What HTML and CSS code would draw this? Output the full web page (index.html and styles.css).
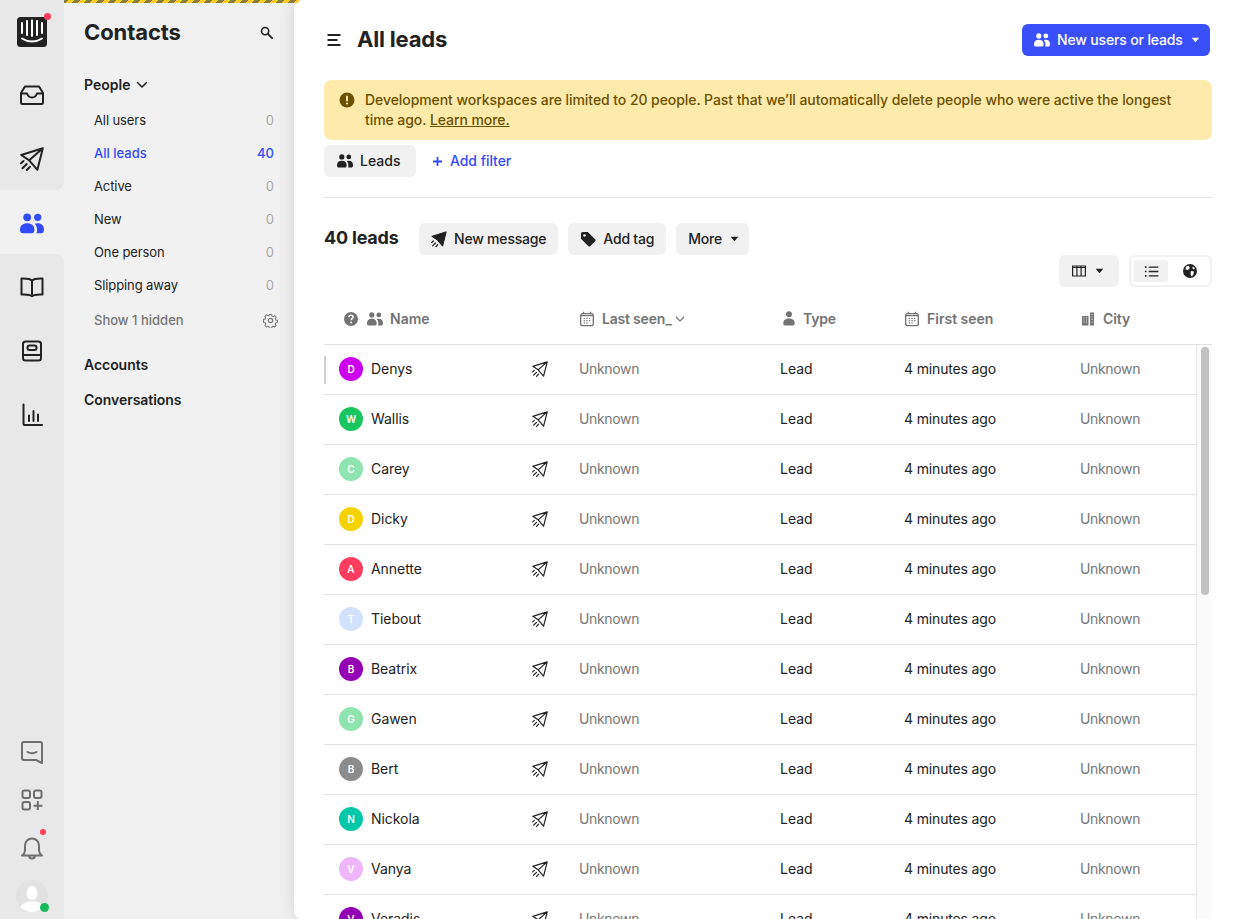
FILE: index.html
```html
<!DOCTYPE html>
<html lang="en">
<head>
<meta charset="utf-8">
<title>All leads</title>
<link rel="stylesheet" href="styles.css">
</head>
<body>
<svg class="defs" aria-hidden="true">
  <symbol id="plane" viewBox="0 0 24 24"><path d="M22.800 1.300 1.200 8l8 5.300 8.200 9.500L22.800 1.300ZM22.800 1.300 9.200 13.300" fill="none" stroke="currentColor" stroke-linejoin="round" stroke-linecap="round"/><path d="M3.500 14 1 16.300M6.700 17 2.500 21.300M10 19.700 6.800 23" fill="none" stroke="currentColor" stroke-linecap="round"/></symbol>
  <symbol id="plane-solid" viewBox="0 0 24 24"><path d="M22.800 1.300 1.200 8l8 5.300 8.200 9.500Z" fill="currentColor" stroke="currentColor" stroke-width="1.500" stroke-linejoin="round"/><path d="M3.500 15 1 17.300M6.700 18 2.500 22.300M10 20.700 7.500 23.500" fill="none" stroke="currentColor" stroke-width="2" stroke-linecap="round"/></symbol>
  <symbol id="people" viewBox="0 0 16 14"><circle cx="4.800" cy="2.900" r="2.600" fill="currentColor"/><circle cx="11.800" cy="2.900" r="2.400" fill="currentColor"/><path d="M0 11.200C0 8.300 2 6.800 4.800 6.800s4.800 1.500 4.800 4.400c0 1.500-.6 2.300-1.600 2.300H1.800C.6 13.500 0 12.700 0 11.200Z" fill="currentColor"/><path d="M11 13.500h3.300c1 0 1.700-.8 1.700-2.300 0-2.900-1.700-4.400-4.200-4.400-.8 0-1.400.1-2 .4 1 1 1.600 2.400 1.600 4 0 .9-.1 1.700-.4 2.300Z" fill="currentColor"/></symbol>
  <symbol id="calendar" viewBox="0 0 16 16"><rect x="1.700" y="2.700" width="12.600" height="12" rx="2" fill="none" stroke="currentColor" stroke-width="1.300"/><path d="M4.500 .8v2.400M11.500 .8v2.400M2 4.600h12" stroke="currentColor" stroke-width="1.300" fill="none"/><path d="M4.700 7.500h1.200M7.400 7.500h1.200M10.100 7.500h1.200M4.700 9.700h1.200M7.400 9.700h1.200M10.100 9.700h1.200M4.700 11.900h1.200M7.400 11.900h1.200" stroke="currentColor" stroke-width="1.200" fill="none"/></symbol>
  <symbol id="caret" viewBox="0 0 10 6"><path d="M.8.500h8.400L5 5.500Z" fill="currentColor"/></symbol>
</svg>

<div class="hazard"></div>

<nav class="rail">
  <div class="rail-seg rail-top">
    <div class="rail-item rail-logo">
      <svg class="logo" viewBox="0 0 30 30"><rect width="30" height="30" rx="3.500" fill="#222"/><path d="M5 6v10M10 4v14M15 3.500v15.500M20 4v14M25 6v10" stroke="#fff" stroke-width="2" stroke-linecap="round" fill="none"/><path d="M5 21.500c6 4 14 4 20 0" stroke="#fff" stroke-width="2" stroke-linecap="round" fill="none"/></svg>
      <span class="dot dot-logo"></span>
    </div>
    <div class="rail-item">
      <svg class="ico24" viewBox="0 0 24 24"><path d="M5 3.500h14l4 6.500v9.500a1.500 1.500 0 0 1-1.500 1.500h-19A1.500 1.500 0 0 1 1 19.500V10z" fill="none" stroke="currentColor" stroke-width="2" stroke-linejoin="round"/><path d="M1.500 10.500H7c1 2.700 2.800 4 5 4s4-1.300 5-4h5.500" fill="none" stroke="currentColor" stroke-width="2" stroke-linejoin="round"/></svg>
    </div>
    <div class="rail-item"><svg class="ico24 ico-plane-lg"><use href="#plane"/></svg></div>
  </div>
  <div class="rail-item rail-active"><svg class="ico-people"><use href="#people"/></svg></div>
  <div class="rail-seg rail-rest">
    <div class="rail-item">
      <svg class="ico24" viewBox="0 0 24 24"><path d="M12 5.500C10 3.800 7 3.200 1.500 3.500v16C7 19.200 10 19.500 12 21.200c2-1.700 5-2 10.500-1.700v-16C17 3.200 14 3.800 12 5.500ZM12 5.500v15.500" fill="none" stroke="currentColor" stroke-width="2" stroke-linejoin="round"/></svg>
    </div>
    <div class="rail-item">
      <svg class="ico24" viewBox="0 0 24 24"><rect x="3" y="2.500" width="18" height="19" rx="2.500" fill="none" stroke="currentColor" stroke-width="2"/><rect x="7.500" y="6.500" width="9" height="4.500" rx="2" fill="none" stroke="currentColor" stroke-width="2"/><path d="M3 16h18" stroke="currentColor" stroke-width="2"/></svg>
    </div>
    <div class="rail-item">
      <svg class="ico24" viewBox="0 0 24 24"><path d="M3.500 1.500V21a1 1 0 0 0 1 1h17.500M9 12.500v5.500M13.500 8v10M18 11.500v6.500" fill="none" stroke="currentColor" stroke-width="2" stroke-linecap="round"/></svg>
    </div>
    <div class="rail-spacer"></div>
    <div class="rail-item rail-small">
      <svg class="ico24" viewBox="0 0 24 24"><path d="M4 2h16a2 2 0 0 1 2 2v19l-6-3H4a2 2 0 0 1-2-2V4a2 2 0 0 1 2-2Z" fill="none" stroke="currentColor" stroke-width="2" stroke-linejoin="round"/><path d="M7.500 12c3 1.700 6 1.700 9 0" fill="none" stroke="currentColor" stroke-width="2" stroke-linecap="round"/></svg>
    </div>
    <div class="rail-item rail-small">
      <svg class="ico24" viewBox="0 0 24 24"><rect x="2.500" y="2.500" width="7.500" height="7.500" rx="2" fill="none" stroke="currentColor" stroke-width="2"/><rect x="14" y="2.500" width="7.500" height="7.500" rx="2" fill="none" stroke="currentColor" stroke-width="2"/><rect x="2.500" y="14" width="7.500" height="7.500" rx="2" fill="none" stroke="currentColor" stroke-width="2"/><path d="M17.800 13v9M13.500 17.800h9" stroke="currentColor" stroke-width="2" fill="none"/></svg>
    </div>
    <div class="rail-item rail-small">
      <svg class="ico24" viewBox="0 0 24 24"><path d="M2 19.500c1.500-1 2.800-2.500 3-5V9.500a7 7 0 0 1 14 0v5c.2 2.500 1.500 4 3 5ZM9 19.500c0 4 6 4 6 0" fill="none" stroke="currentColor" stroke-width="2" stroke-linejoin="round"/></svg>
      <span class="dot dot-bell"></span>
    </div>
    <div class="rail-item rail-small rail-me">
      <svg class="me" viewBox="0 0 32 32"><defs><clipPath id="mec"><circle cx="16" cy="16" r="16"/></clipPath></defs><circle cx="16" cy="16" r="16" fill="#e2e2e2"/><g clip-path="url(#mec)"><ellipse cx="16" cy="13" rx="5.500" ry="7" fill="#fff"/><path d="M3 32c0-7 5-9 9-10.500h8C24 23 29 25 29 32Z" fill="#fff"/></g></svg>
      <span class="dot dot-me"></span>
    </div>
  </div>
</nav>

<aside class="side">
  <div class="side-head">
    <h1 class="side-title">Contacts</h1>
    <svg class="side-search" viewBox="0 0 14 14"><circle cx="5.500" cy="5.500" r="3.900" fill="none" stroke="currentColor" stroke-width="1.700"/><path d="M8.500 8.500 13 13" stroke="currentColor" stroke-width="2" stroke-linecap="round"/></svg>
  </div>
  <div class="side-group">People <svg class="chev" viewBox="0 0 12 8"><path d="M1.500 1.500 6 6l4.500-4.500" fill="none" stroke="currentColor" stroke-width="1.500" stroke-linecap="round" stroke-linejoin="round"/></svg></div>
  <ul class="side-list">
    <li class="side-row"><span>All users</span><span class="count">0</span></li>
    <li class="side-row is-current"><span>All leads</span><span class="count">40</span></li>
    <li class="side-row"><span>Active</span><span class="count">0</span></li>
    <li class="side-row"><span>New</span><span class="count">0</span></li>
    <li class="side-row"><span>One person</span><span class="count">0</span></li>
    <li class="side-row"><span>Slipping away</span><span class="count">0</span></li>
  </ul>
  <div class="side-hidden"><span>Show 1 hidden</span>
    <svg class="gear" viewBox="0 0 16 16"><path d="M6.700 1h2.600l.4 1.900 1.300.6 1.700-1 1.800 1.800-1 1.700.6 1.300 1.900.4v2.600l-1.900.4-.6 1.300 1 1.700-1.800 1.800-1.700-1-1.300.6-.4 1.900H6.700l-.4-1.900-1.300-.6-1.700 1-1.800-1.800 1-1.700-.6-1.300-1.900-.4V6.700l1.900-.4.600-1.300-1-1.700 1.800-1.800 1.700 1 1.300-.6Z" transform="translate(.6 .6) scale(.925)" fill="none" stroke="currentColor" stroke-width="1.200" stroke-linejoin="round"/><circle cx="8" cy="8" r="2.300" fill="none" stroke="currentColor" stroke-width="1.200"/></svg>
  </div>
  <div class="side-link side-link-first">Accounts</div>
  <div class="side-link">Conversations</div>
</aside>

<main class="main">
  <header class="top">
    <div class="top-left">
      <svg class="menu" viewBox="0 0 14 12"><path d="M.5 1h13M.5 6h10M.5 11h13" stroke="currentColor" stroke-width="2" fill="none"/></svg>
      <h2 class="page-title">All leads</h2>
    </div>
    <button class="btn-primary"><svg class="ico-p"><use href="#people"/></svg><span>New users or leads</span><svg class="caret"><use href="#caret"/></svg></button>
  </header>

  <div class="banner">
    <svg class="banner-ico" viewBox="0 0 16 16"><circle cx="8" cy="8" r="7.500" fill="currentColor"/><rect x="7" y="3.500" width="2" height="6" rx="1" fill="#feebab"/><circle cx="8" cy="11.500" r="1.100" fill="#feebab"/></svg>
    <p class="banner-text">Development workspaces are limited to 20 people. Past that we’ll automatically delete people who were active the longest time ago. <a class="banner-link">Learn more.</a></p>
  </div>

  <div class="filters">
    <div class="chip"><svg class="ico-p"><use href="#people"/></svg>Leads</div>
    <div class="add-filter"><svg class="plus" viewBox="0 0 9 9"><path d="M4.500 0v9M0 4.500h9" stroke="currentColor" stroke-width="1.800" fill="none"/></svg>Add filter</div>
  </div>
  <hr class="rule">

  <div class="bulk">
    <div class="bulk-count">40 leads</div>
    <button class="btn"><svg class="ico-16"><use href="#plane-solid"/></svg>New message</button>
    <button class="btn"><svg class="ico-16" viewBox="0 0 16 16"><path d="M1 2.500A1.500 1.500 0 0 1 2.500 1h4.700c.4 0 .8.200 1.100.4l6.800 6.800a1.500 1.500 0 0 1 0 2.100l-4.700 4.700a1.500 1.500 0 0 1-2.100 0L1.400 8.300A1.500 1.500 0 0 1 1 7.200Z" fill="currentColor"/><circle cx="4.500" cy="4.500" r="1.300" fill="#f1f1f1"/></svg>Add tag</button>
    <button class="btn btn-more">More<svg class="caret"><use href="#caret"/></svg></button>
  </div>

  <div class="views">
    <button class="btn btn-cols">
      <svg class="ico-cols" viewBox="0 0 14 12"><path d="M.6 1h12.800v10H.6ZM.6 2.500h12.800M4.900 1v10M9.100 1v10" fill="none" stroke="currentColor" stroke-width="1.200"/></svg>
      <svg class="caret"><use href="#caret"/></svg>
    </button>
    <div class="switch">
      <span class="switch-item is-on"><svg class="ico-list" viewBox="0 0 16 12"><path d="M5 1.200h10.500M5 6h10.500M5 10.800h10.500" stroke="currentColor" stroke-width="1.400" fill="none"/><path d="M.8 1.200h1.800M.8 6h1.800M.8 10.800h1.800" stroke="currentColor" stroke-width="1.800" fill="none"/></svg></span>
      <span class="switch-item switch-globe"><svg class="ico-globe" viewBox="0 0 14 14"><circle cx="7" cy="7" r="7" fill="currentColor"/><path d="M3 2.500 6 1.800 6.800 4 5 6 2.500 5.500ZM8 7l3 .5-.8 3.500-1.700 1.500L7.500 10ZM10 2.500l2 2-1.500 1-1.300-1.500Z" fill="#fff"/></svg></span>
    </div>
  </div>

  <div class="thead">
    <div class="th th-name">
      <svg class="ico-help" viewBox="0 0 14 14"><circle cx="7" cy="7" r="7" fill="currentColor"/><path d="M4.900 5.200C5 4 5.900 3.300 7 3.300c1.200 0 2.100.8 2.100 1.900 0 1.500-2 1.500-2 3" fill="none" stroke="#fff" stroke-width="1.500"/><circle cx="7.100" cy="10.500" r="1" fill="#fff"/></svg>
      <svg class="ico-p"><use href="#people"/></svg>Name
    </div>
    <div class="th th-seen"><svg class="ico-cal"><use href="#calendar"/></svg>Last seen_<svg class="chev-sm" viewBox="0 0 10 6"><path d="M1 1l4 4 4-4" fill="none" stroke="currentColor" stroke-width="1.200"/></svg></div>
    <div class="th th-type"><svg class="ico-user" viewBox="0 0 12 15"><circle cx="6" cy="3.300" r="3" fill="currentColor"/><path d="M.3 12c0-3 2.300-4.500 5.700-4.500S11.700 9 11.700 12c0 1.800-.8 2.500-2 2.500H2.300c-1.200 0-2-.7-2-2.500Z" fill="currentColor"/></svg>Type</div>
    <div class="th"><svg class="ico-cal"><use href="#calendar"/></svg>First seen</div>
    <div class="th th-city"><svg class="ico-city" viewBox="0 0 12 14"><path d="M0 4h6.500v9.500H0ZM8 .5h4v13H8Z" fill="currentColor"/><path d="M1.500 5.800h1M4 5.800h1M1.500 8h1M4 8h1M1.500 10.200h1M4 10.200h1M9.500 2.500h1M9.500 5h1M9.500 7.500h1M9.500 10h1" stroke="#fff" stroke-width="1"/></svg>City</div>
  </div>

  <div class="tbody">
    <div class="rows">
      <div class="row is-marked"><div class="c-name"><span class="ava a-magenta">D</span><span class="nm">Denys</span><svg class="ico-row"><use href="#plane"/></svg></div><div class="muted">Unknown</div><div>Lead</div><div class="when">4 minutes ago</div><div class="muted">Unknown</div></div>
      <div class="row"><div class="c-name"><span class="ava a-green">W</span><span class="nm">Wallis</span><svg class="ico-row"><use href="#plane"/></svg></div><div class="muted">Unknown</div><div>Lead</div><div class="when">4 minutes ago</div><div class="muted">Unknown</div></div>
      <div class="row"><div class="c-name"><span class="ava a-mint">C</span><span class="nm">Carey</span><svg class="ico-row"><use href="#plane"/></svg></div><div class="muted">Unknown</div><div>Lead</div><div class="when">4 minutes ago</div><div class="muted">Unknown</div></div>
      <div class="row"><div class="c-name"><span class="ava a-yellow">D</span><span class="nm">Dicky</span><svg class="ico-row"><use href="#plane"/></svg></div><div class="muted">Unknown</div><div>Lead</div><div class="when">4 minutes ago</div><div class="muted">Unknown</div></div>
      <div class="row"><div class="c-name"><span class="ava a-red">A</span><span class="nm">Annette</span><svg class="ico-row"><use href="#plane"/></svg></div><div class="muted">Unknown</div><div>Lead</div><div class="when">4 minutes ago</div><div class="muted">Unknown</div></div>
      <div class="row"><div class="c-name"><span class="ava a-sky">T</span><span class="nm">Tiebout</span><svg class="ico-row"><use href="#plane"/></svg></div><div class="muted">Unknown</div><div>Lead</div><div class="when">4 minutes ago</div><div class="muted">Unknown</div></div>
      <div class="row"><div class="c-name"><span class="ava a-purple">B</span><span class="nm">Beatrix</span><svg class="ico-row"><use href="#plane"/></svg></div><div class="muted">Unknown</div><div>Lead</div><div class="when">4 minutes ago</div><div class="muted">Unknown</div></div>
      <div class="row"><div class="c-name"><span class="ava a-mint">G</span><span class="nm">Gawen</span><svg class="ico-row"><use href="#plane"/></svg></div><div class="muted">Unknown</div><div>Lead</div><div class="when">4 minutes ago</div><div class="muted">Unknown</div></div>
      <div class="row"><div class="c-name"><span class="ava a-grey">B</span><span class="nm">Bert</span><svg class="ico-row"><use href="#plane"/></svg></div><div class="muted">Unknown</div><div>Lead</div><div class="when">4 minutes ago</div><div class="muted">Unknown</div></div>
      <div class="row"><div class="c-name"><span class="ava a-teal">N</span><span class="nm">Nickola</span><svg class="ico-row"><use href="#plane"/></svg></div><div class="muted">Unknown</div><div>Lead</div><div class="when">4 minutes ago</div><div class="muted">Unknown</div></div>
      <div class="row"><div class="c-name"><span class="ava a-lilac">V</span><span class="nm">Vanya</span><svg class="ico-row"><use href="#plane"/></svg></div><div class="muted">Unknown</div><div>Lead</div><div class="when">4 minutes ago</div><div class="muted">Unknown</div></div>
      <div class="row"><div class="c-name"><span class="ava a-purple">V</span><span class="nm">Veradis</span><svg class="ico-row"><use href="#plane"/></svg></div><div class="muted">Unknown</div><div>Lead</div><div class="when">4 minutes ago</div><div class="muted">Unknown</div></div>
    </div>
    <div class="track"><div class="thumb"></div></div>
  </div>
</main>
</body>
</html>
```

FILE: styles.css
```css
* { box-sizing: border-box; }
html, body { height: 100%; }
body {
  margin: 0;
  height: 919px;
  overflow: hidden;
  display: flex;
  position: relative;
  background: #f1f1f1;
  color: #222;
  font: 400 14px/20px Inter, "Liberation Sans", sans-serif;
}
.defs { width: 0; height: 0; position: absolute; }
h1, h2, p, ul { margin: 0; padding: 0; }
ul { list-style: none; }
button { font: inherit; border: 0; color: inherit; }
svg { display: block; flex: none; }

.hazard {
  position: absolute;
  z-index: 5;
  top: 0; left: 64px;
  width: 236px; height: 3px;
  background: repeating-linear-gradient(-45deg, #f8cd27 0 4.25px, #8d7d3c 4.25px 8.5px);
  clip-path: polygon(0 0, 100% 0, 99% 100%, 0 100%);
}

/* Rail */
.rail { width: 64px; flex: none; display: flex; flex-direction: column; height: 919px; background: #f1f1f1; }
.rail-seg { background: #e8e8e8; display: flex; flex-direction: column; }
.rail-top { height: 190px; border-bottom-right-radius: 8px; }
.rail-rest { flex: 1; padding-top: 1px; border-top-right-radius: 8px; }
.rail-spacer { flex: 1; }
.rail-item { height: 64px; flex: none; display: flex; align-items: center; justify-content: center; position: relative; color: #222; }
.rail-logo { height: 63px; }
.rail-small { height: 48px; color: #6f6f6f; }
.rail-me { height: 47px; }
.rail-active { color: #334bfa; padding-top: 2px; }
.ico24 { width: 24px; height: 24px; }
.ico-plane-lg { stroke-width: 2; }
.ico-people { width: 24px; height: 21px; }
.logo { width: 30px; height: 30px; }
.me { width: 32px; height: 32px; }
.dot { position: absolute; border-radius: 50%; }
.dot-logo { width: 7px; height: 7px; left: 43.500px; top: 12.500px; background: #ff3d5f; }
.dot-bell { width: 6px; height: 6px; left: 40px; top: 5px; background: #ff3d5f; }
.dot-me { width: 9px; height: 9px; left: 40px; top: 31px; background: #19b85a; }

/* Sidebar */
.side { width: 230px; flex: none; padding: 0 20px; background: #f1f1f1; }
.side-head { height: 64px; display: flex; align-items: center; justify-content: space-between; }
.side-title { font-size: 22px; line-height: 28px; font-weight: 700; letter-spacing: -.1px; }
.side-search { width: 13px; height: 13px; margin-right: 1px; }
.side-group { display: flex; align-items: center; gap: 6px; height: 20px; margin-top: 11px; font-weight: 600; }
.chev { width: 12px; height: 8px; }
.side-list { margin-top: 8px; }
.side-row { height: 33px; padding-left: 10px; display: flex; align-items: center; justify-content: space-between; font-size: 13px; letter-spacing: -.1px; }
.side-row .count { color: #a8a8a8; letter-spacing: 0; }
.is-current { color: #334bfa; font-weight: 500; letter-spacing: 0; }
.is-current .count { color: #334bfa; }
.side-hidden { height: 36px; margin-top: 1px; padding-left: 10px; display: flex; align-items: center; justify-content: space-between; font-size: 13px; font-weight: 500; color: #767676; }
.gear { width: 15px; height: 15px; margin-right: -4px; }
.side-link { height: 20px; margin-top: 15px; font-weight: 600; letter-spacing: -.05px; }
.side-link-first { margin-top: 17px; }

/* Main */
.main {
  flex: 1;
  min-width: 0;
  height: 919px;
  padding: 24px 30px 0;
  background: #fff;
  border-radius: 8px 0 0 8px;
  box-shadow: 0 0 18px rgba(0, 0, 0, .13);
  position: relative;
  display: flex;
  flex-direction: column;
}
.top { height: 32px; flex: none; display: flex; align-items: center; justify-content: space-between; }
.top-left { display: flex; align-items: center; gap: 16px; padding-left: 3px; }
.menu { width: 14px; height: 12px; }
.page-title { font-size: 22px; line-height: 30px; padding-bottom: 2px; font-weight: 700; letter-spacing: -.2px; }
.btn-primary { height: 32px; width: 188px; margin-right: 2px; padding: 0 10px 0 12px; display: flex; align-items: center; background: #3a4ffa; color: #fff; border-radius: 6px; font-weight: 500; letter-spacing: -.15px; white-space: nowrap; }
.ico-p { width: 16px; height: 14px; }
.btn-primary .ico-p { margin-right: 7px; }
.btn-primary .caret { margin-left: auto; }
.caret { width: 9px; height: 6px; }

.banner { flex: none; height: 60px; margin-top: 24px; padding: 10px 25px 10px 15px; display: flex; gap: 10px; background: #feebab; border-radius: 8px; color: #6b5000; font-weight: 500; letter-spacing: -.07px; }
.banner-ico { width: 16px; height: 16px; margin-top: 2px; }
.banner-text { flex: 1; }
.banner-link { text-decoration: underline; }

.filters { flex: none; height: 32px; margin-top: 5px; display: flex; align-items: center; gap: 16px; }
.chip { height: 32px; width: 92px; display: flex; align-items: center; gap: 7px; padding-left: 13px; background: #f1f1f1; border-radius: 6px; font-weight: 500; }
.add-filter { display: flex; align-items: center; gap: 9px; padding-left: 1px; color: #334bfa; font-weight: 500; letter-spacing: -.05px; }
.plus { width: 9px; height: 9px; margin-right: -1px; }
.rule { flex: none; margin: 20px 0 0; height: 1px; border: 0; background: #e4e4e4; }

.bulk { flex: none; height: 32px; margin-top: 25px; display: flex; align-items: center; }
.bulk-count { width: 95px; font-size: 18px; font-weight: 700; letter-spacing: -.2px; padding-bottom: 2px; white-space: nowrap; }
.btn { height: 32px; display: flex; align-items: center; gap: 7px; padding: 0 12px; margin-right: 10px; background: #f1f1f1; border-radius: 6px; font-weight: 500; letter-spacing: -.2px; white-space: nowrap; }
.ico-16 { width: 16px; height: 16px; }
.btn-more { gap: 8px; padding-right: 10px; }

.views { flex: none; height: 32px; display: flex; justify-content: flex-end; align-items: flex-start; }
.btn-cols { width: 60px; margin-right: 10px; gap: 9px; padding: 0 0 0 13px; }
.ico-cols { width: 14px; height: 12px; }
.switch { width: 83px; height: 32px; padding: 3px; display: flex; border: 2px solid #f1f1f1; border-radius: 6px; }
.switch-item { flex: 1; height: 22px; display: flex; align-items: center; justify-content: center; border-radius: 3px; }
.switch-item.is-on { flex: none; width: 34px; background: #f1f1f1; }
.switch-globe { padding-left: 5px; }
.ico-list { width: 15px; height: 11px; }
.ico-globe { width: 14px; height: 14px; }

.thead {
  flex: none;
  height: 58px;
  padding-right: 15px;
  display: grid;
  grid-template-columns: 255px 201px 124px 176px 117px;
  align-items: center;
  border-bottom: 1px solid #e4e4e4;
  color: #737373;
  font-weight: 600;
  padding-top: 6px;
}
.th { display: flex; align-items: center; gap: 7px; white-space: nowrap; }
.th-seen { letter-spacing: -.2px; }
.th-type { padding-left: 2px; gap: 8px; letter-spacing: -.2px; }
.th-city { padding-left: 2px; gap: 9px; letter-spacing: -.1px; }
.th-name { padding-left: 20px; gap: 7px; }
.th-name .ico-p { margin-left: 2px; }
.ico-help { width: 14px; height: 14px; }
.ico-cal { width: 16px; height: 16px; }
.ico-user { width: 12px; height: 15px; margin-left: 1px; }
.ico-city { width: 12px; height: 14px; }
.chev-sm { width: 10px; height: 6px; margin-left: -4px; }

.tbody { flex: 1; min-height: 0; display: flex; overflow: hidden; }
.rows { flex: 1; border-right: 1px solid #e8e8e8; }
.row {
  height: 50px;
  display: grid;
  grid-template-columns: 255px 201px 124px 176px 116px;
  align-items: center;
  border-bottom: 1px solid #e4e4e4;
  padding-bottom: 1px;
  position: relative;
}
.is-marked::before { content: ""; position: absolute; left: 0; top: 11px; width: 2px; height: 28px; background: #cfcfcf; }
.c-name { display: flex; align-items: center; padding-left: 15px; }
.ava { width: 24px; height: 24px; flex: none; border-radius: 50%; display: flex; align-items: center; justify-content: center; color: #fff; font-size: 10px; font-weight: 600; }
.nm { margin-left: 8px; flex: 1; letter-spacing: -.05px; }
.ico-row { width: 16px; height: 16px; margin-right: 31px; stroke-width: 1.800; }
.muted { color: #777; letter-spacing: -.35px; }
.when { letter-spacing: -.15px; }
.a-magenta { background: #cc00ee; }
.a-green { background: #19c55f; }
.a-mint { background: #8fe5b0; }
.a-yellow { background: #f6d300; }
.a-red { background: #ff3d5f; }
.a-sky { background: #d2e2fc; }
.a-purple { background: #9400b3; }
.a-grey { background: #8c8c8c; }
.a-teal { background: #00c8a8; }
.a-lilac { background: #efb6fc; }
.track { width: 15px; flex: none; background: #fbfbfb; padding: 2px 3px 0 4px; }
.thumb { height: 248px; border-radius: 4px; background: #c1c1c1; }
```
